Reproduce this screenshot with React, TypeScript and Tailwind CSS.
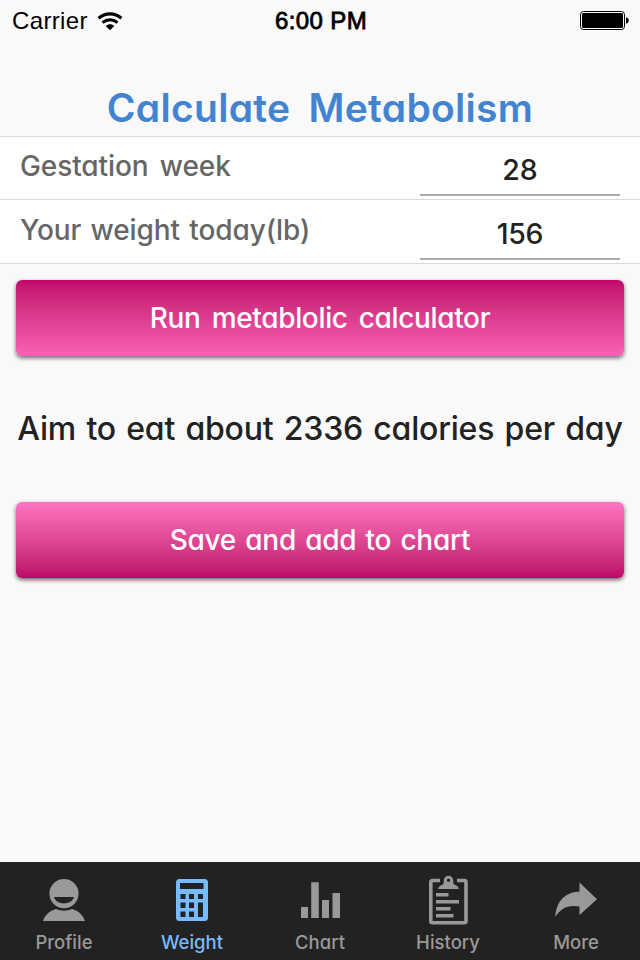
import React, { useState } from "react";

type TabId = 'profile' | 'weight' | 'chart' | 'history' | 'more';

interface FieldProps {
    label: string;
    value: string;
    labelClass: string;
    valueClass: string;
    rowClass: string;
    onChange: (value: string) => void;
}

const WifiIcon = () => (
    <svg className="ml-[9px] mt-px" width="26" height="19" viewBox="0 0 26 19" fill="none">
        <path d="M1.6 6.3C8.2 .3 17.8 .3 24.4 6.3" stroke="black" strokeWidth="3.2" />
        <path d="M5.5 10.7C10 6.8 16 6.8 20.5 10.7" stroke="black" strokeWidth="3" />
        <path d="M13 18.3L8.7 13.9C11.2 11.8 14.8 11.8 17.3 13.9Z" fill="black" />
    </svg>
);

const BatteryIcon = () => (
    <svg width="50" height="19" viewBox="0 0 50 19">
        <rect x="0.5" y="0.5" width="44" height="18" rx="3" fill="none" stroke="black" />
        <rect x="2" y="2" width="41" height="15" rx="1.5" fill="black" />
        <path d="M46 6.2C49.7 7 49.7 12 46 12.8Z" fill="black" />
    </svg>
);

const ProfileIcon = () => (
    <svg width="64" height="52" viewBox="0 0 64 52" fill="currentColor">
        <path fillRule="evenodd" d="M32 6a14.6 14.6 0 1 1 0 29.2a14.6 14.6 0 0 1 0-29.2ZM22 24C24 32.6 40 32.6 42 24Z" />
        <path d="M11 48C13 42 18 37.5 24 36C29 38.2 35 38.2 40 36C46 37.5 51 42 53 48Z" />
    </svg>
);

const CalculatorIcon = () => (
    <svg width="64" height="52" viewBox="0 0 64 52" fill="currentColor">
        <path
            fillRule="evenodd"
            d="M19.5 6h25q3.500 0 3.500 3.500v35q0 3.500-3.500 3.500h-25q-3.500 0-3.500-3.500v-35q0-3.500 3.500-3.500ZM20 10v6h23.500v-6ZM20.500 21v5h5v-5ZM29 21v5h5v-5ZM38 21v5h5v-5ZM20.500 29.500v5.500h5v-5.500ZM29 29.500v5.500h5v-5.500ZM38 29.500v14.500h5v-14.500ZM20.500 38.500v5.500h5v-5.500ZM29 38.500v5.500h5v-5.500Z"
        />
    </svg>
);

const ChartIcon = () => (
    <svg width="64" height="52" viewBox="0 0 64 52" fill="currentColor">
        <path d="M13 34h7v11h-7ZM23.2 9.2h7.6v35.8h-7.6ZM34 27h7v18h-7ZM44.5 20h7.5v25h-7.5Z" />
    </svg>
);

const ClipboardIcon = () => (
    <svg width="64" height="52" viewBox="0 0 64 52" fill="currentColor">
        <path d="M24 7.5H16.5Q14.8 7.5 14.8 9.2V48Q14.8 49.8 16.5 49.8H48.3Q50 49.8 50 48V9.2Q50 7.5 48.3 7.5H41" fill="none" stroke="currentColor" strokeWidth="3.6" />
        <path fillRule="evenodd" d="M22.2 16Q22.7 12.6 27 11.5Q28 11 27.8 7.5C28 1.2 37 1.2 37.2 7.5Q37 11 38 11.5Q42.3 12.6 42.8 16ZM32.5 5.6a1.7 1.7 0 1 0 0 3.4a1.7 1.7 0 0 0 0-3.4Z" />
        <path d="M20 20h12.5v3.5H20ZM20 27h23v3.5H20ZM20 34h14.5v3.5H20ZM20 41h17.5v3.5H20Z" />
    </svg>
);

const ShareIcon = () => (
    <svg width="64" height="52" viewBox="0 0 64 52" fill="currentColor">
        <path d="M35.5 9.5L53 26.3L35.5 42V33.5C24 31.5 16.5 35.5 11.3 44C12 29.5 20.5 18.8 35.5 18.8Z" />
    </svg>
);

const tabs: { id: TabId; label: string; icon: React.FC }[] = [
    { id: 'profile', label: 'Profile', icon: ProfileIcon },
    { id: 'weight', label: 'Weight', icon: CalculatorIcon },
    { id: 'chart', label: 'Chart', icon: ChartIcon },
    { id: 'history', label: 'History', icon: ClipboardIcon },
    { id: 'more', label: 'More', icon: ShareIcon }
];

const Field: React.FC<FieldProps> = ({ label, value, labelClass, valueClass, rowClass, onChange }) => (
    <label className={`flex justify-between border-b border-[#d9d9d9] bg-white px-5 ${rowClass}`}>
        <span className={`whitespace-nowrap text-[28px] font-medium leading-[40px] text-[#666] ${labelClass}`}>{label}</span>
        <input
            className={`mb-[3px] mt-[6px] w-[200px] border-b-2 border-[#aaa] bg-transparent text-center text-[28.5px] font-medium leading-[40px] text-[#222] outline-none ${valueClass}`}
            value={value}
            onChange={(e) => onChange(e.target.value)}
        />
    </label>
);

const App: React.FC = () => {
    const [week, setWeek] = useState<string>('28');
    const [weight, setWeight] = useState<string>('156');
    const [activeTab, setActiveTab] = useState<TabId>('weight');

    return (
        <div className="flex h-[960px] w-[640px] flex-col overflow-hidden bg-[#f9f9f9] font-['Inter','Noto_Sans',sans-serif] [font-feature-settings:'cv11'_1]">
            {/* Status bar */}
            <div className="grid h-10 grid-cols-3 items-center pl-3 pr-[10px] font-['Liberation_Sans',sans-serif] text-2xl text-black">
                <div className="flex items-center pt-px tracking-[0.35px]">
                    Carrier
                    <WifiIcon />
                </div>
                <div className="pt-px text-center tracking-[0.4px] [-webkit-text-stroke:0.8px_black]">6:00 PM</div>
                <div className="flex justify-end">
                    <BatteryIcon />
                </div>
            </div>

            <h1 className="h-24 whitespace-nowrap pt-[38px] text-center text-[39px] font-semibold leading-[60px] tracking-[0.3px] text-[#4384d1] [word-spacing:8px]">
                Calculate Metabolism
            </h1>

            {/* Inputs */}
            <div className="border-t border-[#d9d9d9]">
                <Field
                    label="Gestation week"
                    value={week}
                    labelClass="mt-[9px] [word-spacing:4px] tracking-[-0.1px]"
                    valueClass="pt-0.5"
                    rowClass="h-[63px]"
                    onChange={setWeek}
                />
                <Field
                    label="Your weight today(lb)"
                    value={weight}
                    labelClass="mt-[10px] [word-spacing:2px] tracking-[-0.1px]"
                    valueClass="pt-1 tracking-[-0.3px]"
                    rowClass="h-16"
                    onChange={setWeight}
                />
            </div>

            <button className="mx-4 mt-4 h-[76px] shrink-0 rounded-md bg-gradient-to-b from-[#c0066a] to-[#fa60b5] text-[28px] font-medium tracking-[-0.35px] text-white shadow-[0_2px_4px_rgba(0,0,0,0.6)] [word-spacing:4px]">
                Run metablolic calculator
            </button>

            <p className="mt-[43px] whitespace-nowrap text-center text-[32px] font-medium leading-[60px] tracking-[-0.2px] text-[#222] [word-spacing:2px]">
                Aim to eat about 2336 calories per day
            </p>

            <button className="mx-4 mt-[43px] h-[76px] shrink-0 rounded-md bg-gradient-to-b from-[#ff73c0] to-[#bd0368] text-[28px] font-medium tracking-[-0.25px] text-white shadow-[0_2px_4px_rgba(0,0,0,0.6)] [word-spacing:2px]">
                Save and add to chart
            </button>

            {/* Bottom tabs */}
            <nav className="mt-auto grid h-[98px] grid-cols-5 bg-[#222]">
                {tabs.map(({ id, label, icon: Icon }) => (
                    <button
                        key={id}
                        className={`flex flex-col items-center pt-[11px] ${activeTab === id ? 'text-[#77bbff]' : 'text-[#999]'}`}
                        onClick={() => setActiveTab(id)}
                    >
                        <Icon />
                        <span className="mt-[5px] text-[18.5px] font-medium leading-6">{label}</span>
                    </button>
                ))}
            </nav>
        </div>
    );
};

export default App;
